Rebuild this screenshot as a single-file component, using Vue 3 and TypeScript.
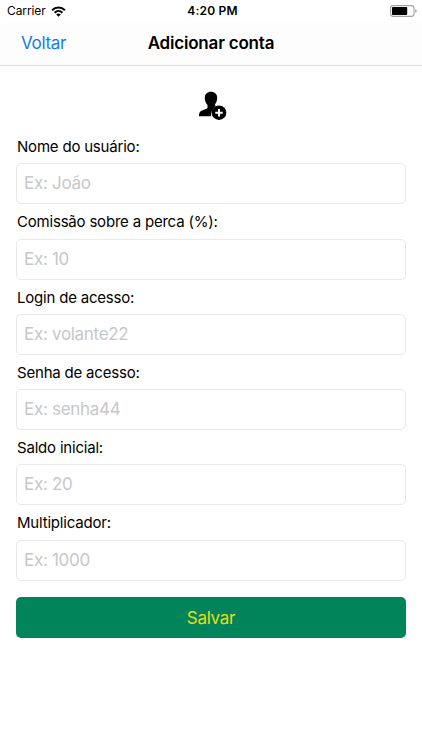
<script setup lang="ts">
import { reactive } from 'vue'

interface Field {
  key: string
  label: string
  placeholder: string
}

const fields: Field[] = [
  { key: 'nome', label: 'Nome do usuário:', placeholder: 'Ex: João' },
  { key: 'comissao', label: 'Comissão sobre a perca (%):', placeholder: 'Ex: 10' },
  { key: 'login', label: 'Login de acesso:', placeholder: 'Ex: volante22' },
  { key: 'senha', label: 'Senha de acesso:', placeholder: 'Ex: senha44' },
  { key: 'saldo', label: 'Saldo inicial:', placeholder: 'Ex: 20' },
  { key: 'multiplicador', label: 'Multiplicador:', placeholder: 'Ex: 1000' },
]

const form = reactive<Record<string, string>>({
  nome: '',
  comissao: '',
  login: '',
  senha: '',
  saldo: '',
  multiplicador: '',
})
</script>

<template>
  <div class="screen">
    <header class="header">
      <div class="status-bar">
        <div class="carrier">
          <span>Carrier</span>
          <svg class="wifi" width="15" height="11" viewBox="0 0 15 11" fill="none">
            <path d="M1.1 4.2C4.7 0.6 10.3 0.6 13.9 4.2" stroke="#000" stroke-width="2" />
            <path d="M3.6 6.7C5.9 4.5 9.1 4.5 11.4 6.7" stroke="#000" stroke-width="1.9" />
            <path d="M7.5 10.8L5.2 8.4C6.5 7.2 8.5 7.2 9.8 8.4Z" fill="#000" />
          </svg>
        </div>
        <span class="time">4:20 PM</span>
        <svg class="battery" width="28" height="12" viewBox="0 0 28 12">
          <rect x="0.6" y="0.6" width="23.4" height="10.8" rx="2.6" fill="#fff" stroke="#a3a3a3" stroke-width="1.1" />
          <rect x="2" y="2" width="15.2" height="8" rx="0.8" fill="#000" />
          <path d="M25.2 4.2C27.2 4.7 27.2 7.3 25.2 7.8Z" fill="#a3a3a3" />
        </svg>
      </div>
      <nav class="nav-bar">
        <a class="back">Voltar</a>
        <h1 class="title">Adicionar conta</h1>
      </nav>
    </header>

    <form class="form" @submit.prevent>
      <svg class="user-icon" width="30" height="30" viewBox="0 0 30 30">
        <path d="M13 0.8C9.2 0.8 6.8 3.2 6.8 6.8C6.8 9.8 7.7 12.2 9.5 14V17.2L3.6 19.8C1.6 20.8 0.9 22 0.9 25.3H13.1C12.8 20.6 15.6 16.5 18 14.8C16.6 14.6 17 13.6 17.2 13.1C18.5 11.5 19.2 9.4 19.2 6.8C19.2 3.2 16.8 0.8 13 0.8Z" />
        <circle cx="21" cy="21.7" r="7.3" />
        <path d="M21 18V25.4M17.3 21.7H24.7" stroke="#fff" stroke-width="2" />
      </svg>

      <div v-for="field in fields" :key="field.key" class="field">
        <label class="label" :for="field.key">{{ field.label }}</label>
        <input :id="field.key" v-model="form[field.key]" class="input" type="text" :placeholder="field.placeholder" />
      </div>

      <button class="save" type="submit">Salvar</button>
    </form>
  </div>
</template>

<style>
body {
  background: #fff;
}
</style>

<style scoped>
.screen {
  height: 750px;
  box-sizing: border-box;
  overflow: hidden;
  background: #fff;
  color: #000;
  font-family: Inter, Roboto, sans-serif;
}

.header {
  height: 66px;
  box-sizing: border-box;
  border-bottom: 1px solid #dcdcdc;
  background: linear-gradient(#fff 22px, #fdfdfd 22px);
}

/* ---- Status bar ---- */
.status-bar {
  display: grid;
  grid-template-columns: 1fr auto 1fr;
  align-items: center;
  height: 22px;
  padding: 0 4px 0 7px;
  font-size: 12px;
  line-height: 22px;
}

.carrier {
  display: flex;
  align-items: center;
  gap: 5px;
  letter-spacing: -0.1px;
}

.time {
  font-weight: 600;
  letter-spacing: 0.2px;
}

.battery {
  justify-self: end;
}

/* ---- Navigation ---- */
.nav-bar {
  display: grid;
  grid-template-columns: 1fr auto 1fr;
  align-items: center;
  height: 41px;
  padding: 0 21px;
}

.back {
  color: #147ce5;
  font-size: 17px;
  letter-spacing: -0.3px;
  cursor: pointer;
}

.title {
  margin: 0;
  font-size: 17px;
  font-weight: 600;
  letter-spacing: -0.2px;
}

/* ---- Form ---- */
.form {
  display: flex;
  flex-direction: column;
  padding: 25px 16px 0;
}

.user-icon {
  align-self: center;
  margin: 0 0 8px 3px;
}

.field {
  display: flex;
  flex-direction: column;
  height: 75.3px;
}

.label {
  height: 34.3px;
  padding-left: 1px;
  font-size: 15px;
  line-height: 35px;
  letter-spacing: -0.2px;
}

.input {
  box-sizing: border-box;
  width: 100%;
  height: 41px;
  margin: 0;
  padding: 0 7px 1px;
  border: 1px solid #e8e8e8;
  border-radius: 5px;
  outline: none;
  background: #fff;
  color: #000;
  font-family: inherit;
  font-size: 17px;
  letter-spacing: -0.3px;
}

.input::placeholder {
  color: #c7c7cb;
  opacity: 1;
}

.save {
  height: 41px;
  margin-top: 16px;
  padding: 2px 0 0;
  border: none;
  border-radius: 5px;
  background: #02845a;
  color: #e5df18;
  font-family: inherit;
  font-size: 17px;
  letter-spacing: -0.3px;
  cursor: pointer;
}
</style>
